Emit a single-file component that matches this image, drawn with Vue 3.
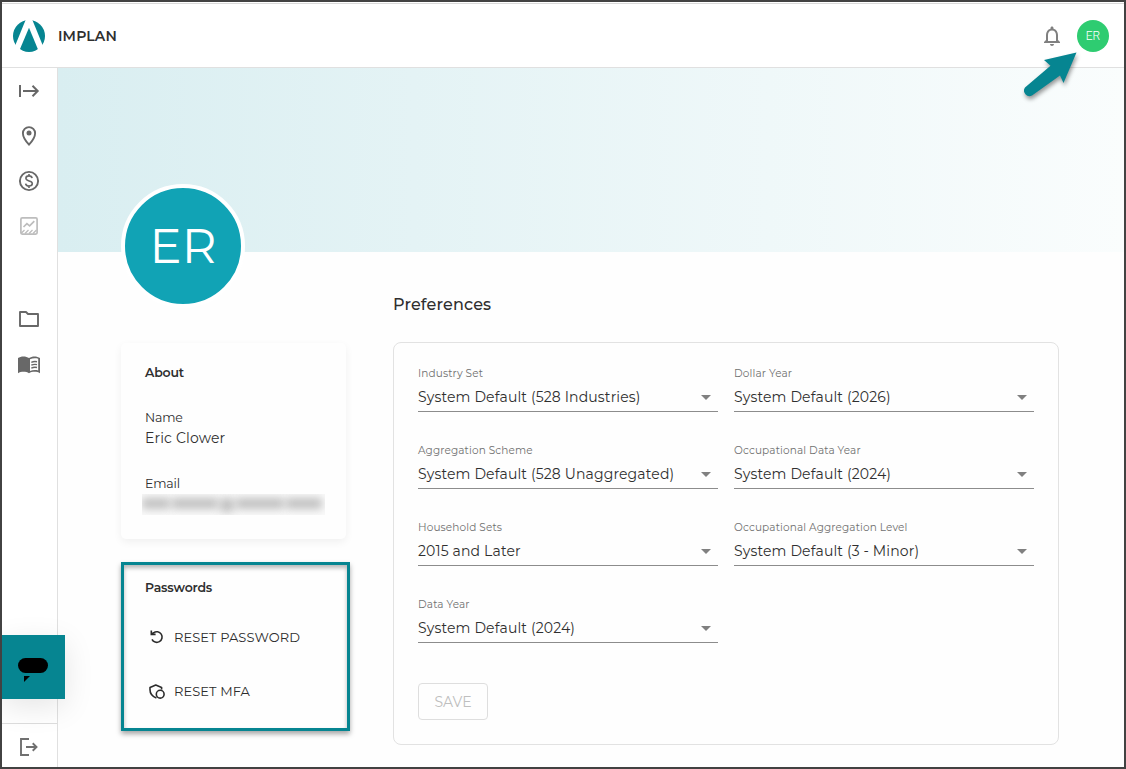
<script setup>
import { reactive } from 'vue'

const fields = reactive([
  { label: 'Industry Set', value: 'System Default (528 Industries)' },
  { label: 'Dollar Year', value: 'System Default (2026)' },
  { label: 'Aggregation Scheme', value: 'System Default (528 Unaggregated)' },
  { label: 'Occupational Data Year', value: 'System Default (2024)' },
  { label: 'Household Sets', value: '2015 and Later' },
  { label: 'Occupational Aggregation Level', value: 'System Default (3 - Minor)' },
  { label: 'Data Year', value: 'System Default (2024)' },
])
</script>

<template>
  <div class="app">
    <header class="header">
      <svg class="logo" width="32" height="32" viewBox="0 0 32 32">
        <defs>
          <clipPath id="logo-clip"><circle cx="16" cy="16" r="16" /></clipPath>
        </defs>
        <g clip-path="url(#logo-clip)" fill="#068591">
          <path d="M0 0H12.6L1.8 26.5H0z" />
          <path d="M32 0H19.4L30.2 26.5H32z" />
          <path d="M16 7.7L24.8 29L24 32H8L7 29z" />
        </g>
      </svg>
      <span class="brand">IMPLAN</span>
      <div class="header-right">
        <svg class="bell" width="24" height="24" viewBox="0 0 24 24">
          <path fill="#808080" d="M12 22c1.100 0 2-.9 2-2h-4c0 1.100.9 2 2 2zm6-6v-5c0-3.070-1.630-5.640-4.500-6.320V4c0-.83-.67-1.500-1.500-1.500s-1.500.67-1.500 1.500v.68C7.640 5.360 6 7.920 6 11v5l-2 2v1h16v-1l-2-2zm-2 1H8v-6c0-2.480 1.510-4.500 4-4.500s4 2.020 4 4.500v6z" />
        </svg>
        <div class="user">ER</div>
      </div>
    </header>

    <div class="body">
      <nav class="sidebar">
        <a class="nav-item">
          <svg width="24" height="24" viewBox="0 0 24 24" fill="none" stroke="#686868" stroke-width="2">
            <path d="M3 6v12M6 12h15M15.500 6.800L20.700 12l-5.200 5.200" />
          </svg>
        </a>
        <a class="nav-item">
          <svg width="24" height="24" viewBox="0 0 24 24" fill="none" stroke="#686868" stroke-width="1.900">
            <path d="M12 20.700C8.200 16.500 5.900 12.700 5.900 9.200a6.100 6.100 0 0 1 12.200 0c0 3.500-2.300 7.300-6.100 11.500z" />
            <circle cx="12" cy="8.900" r="2.500" fill="#686868" stroke="none" />
          </svg>
        </a>
        <a class="nav-item">
          <svg width="24" height="24" viewBox="0 0 24 24" fill="none" stroke="#686868" stroke-width="1.900">
            <circle cx="12" cy="12" r="9.100" />
            <path d="M15.100 9.100c-.2-1.500-1.400-2.200-3.100-2.200-1.800 0-3.100.9-3.100 2.400 0 3.500 6.400 1.700 6.400 5.200 0 1.600-1.400 2.500-3.300 2.500-1.900 0-3.200-.9-3.400-2.400M12 5v2.200M12 16.800V19" stroke-width="1.600" />
          </svg>
        </a>
        <a class="nav-item disabled">
          <svg width="24" height="24" viewBox="0 0 24 24" fill="none" stroke="#bdbdbd" stroke-width="1.700">
            <rect x="3.900" y="3.900" width="16.200" height="16.200" rx="1.300" />
            <path d="M6.500 13l3.400-3.400 2.700 2.200 4.700-4.700" />
            <path d="M4 19.500l3.500-3.500M8 19.500l3.500-3.500M12 19.500l3.500-3.500M16 19.500l3.500-3.500" stroke-width="1.300" />
          </svg>
        </a>
        <a class="nav-item folder">
          <svg width="24" height="24" viewBox="0 0 24 24" fill="none" stroke="#686868" stroke-width="1.900" stroke-linejoin="round">
            <path d="M3 5h6l2 2h10v12H3z" />
          </svg>
        </a>
        <a class="nav-item book">
          <svg width="24" height="24" viewBox="0 0 24 24" fill="#686868">
            <path d="M12 5.100C10.500 4 8.500 3.500 6.500 3.500S2.300 4 1 5.100v15.100c1.500-.9 3.500-1.400 5.500-1.400s4 .4 5.500 1.400c1.500-.9 3.500-1.400 5.500-1.400s4 .5 5.500 1.400V5.100c-1.500-1.100-3.500-1.600-5.500-1.600S13.500 4 12 5.100zm9.200 12.500c-2.600-.8-5.800-.6-8.200.5V6.300c2.400-1.100 5.600-1.300 8.200-.5z" />
            <path d="M14.300 9.300c1.700-.8 3.800-1 5.700-.6M14.300 12.200c1.700-.8 3.800-1 5.700-.6M14.300 15.100c1.700-.8 3.800-1 5.700-.6" fill="none" stroke="#686868" stroke-width="1.400" />
          </svg>
        </a>
        <a class="nav-item logout">
          <svg width="24" height="24" viewBox="0 0 24 24" fill="none" stroke="#707070" stroke-width="1.900">
            <path d="M12 4H4v16h8M9 12h10M15.700 8.300l3.800 3.700-3.800 3.700" />
          </svg>
        </a>
      </nav>

      <main class="content">
        <div class="banner"></div>
        <div class="columns">
          <section class="profile">
            <div class="avatar">ER</div>
            <div class="about">
              <h3>About</h3>
              <div class="item-label">Name</div>
              <div class="item-value">Eric Clower</div>
              <div class="item-label email">Email</div>
              <div class="masked">
                <i class="w1"></i><i class="w2"></i><i class="w3"></i><i class="w4"></i><i class="w5"></i>
              </div>
            </div>
            <div class="passwords">
              <h3>Passwords</h3>
              <button class="action">
                <svg width="18" height="18" viewBox="0 0 18 18" fill="none" stroke="#2c2c2c" stroke-width="1.600">
                  <path d="M4 5.700L5.600 4.800A5.300 5.300 0 1 1 4 11.300" />
                  <path d="M3.300 2.500v3.900h4.300" />
                </svg>
                <span>RESET PASSWORD</span>
              </button>
              <button class="action">
                <svg width="18" height="18" viewBox="0 0 18 18" fill="none" stroke="#2c2c2c" stroke-width="1.600">
                  <path d="M8.400 16C4.400 14.500 2 11.200 2 7.800V5.400L7.800 3l5.800 2.400v2.200" stroke-linejoin="round" />
                  <circle cx="12.200" cy="12.200" r="3.900" />
                </svg>
                <span>RESET MFA</span>
              </button>
            </div>
          </section>

          <section class="prefs">
            <h2>Preferences</h2>
            <div class="card">
              <div class="grid">
                <div v-for="f in fields" :key="f.label" class="field">
                  <label>{{ f.label }}</label>
                  <div class="select">
                    <span>{{ f.value }}</span>
                    <i class="caret"></i>
                  </div>
                </div>
              </div>
              <button class="save" disabled>SAVE</button>
            </div>
          </section>
        </div>
      </main>
    </div>

    <div class="chat">
      <svg width="63" height="64" viewBox="0 0 63 64">
        <rect x="16" y="23" width="30" height="15" rx="7.500" />
        <path d="M22 41h6l-6 6z" />
      </svg>
    </div>

    <svg class="pointer" width="70" height="60" viewBox="0 0 70 60">
      <path d="M63.500 9.500L31 17L37.500 22.800L12 44.500A5.500 5.500 0 0 0 19 52.500L47 32.500L50.500 40z" fill="#068591" />
    </svg>
  </div>
</template>

<style>
body { margin: 0; background: #fff; }
</style>

<style scoped>
.app {
  position: relative;
  box-sizing: border-box;
  width: 1126px;
  height: 769px;
  display: flex;
  flex-direction: column;
  overflow: hidden;
  border: 2px solid #424242;
  background: #fefefe;
  color: #2f2f2f;
  font-family: Montserrat, Inter, "Open Sans", sans-serif;
}
h2, h3 { margin: 0; }
button { padding: 0; border: 0; background: none; font-family: inherit; }

.header {
  box-sizing: border-box;
  height: 65px;
  margin-top: 1px;
  padding: 0 15px 0 11px;
  display: flex;
  align-items: center;
  flex-shrink: 0;
  background: #fff;
  border-top: 1px solid #d9d9d9;
  border-bottom: 1px solid #e0e0e0;
}
.brand { margin-left: 13px; font-size: 14px; font-weight: 600; letter-spacing: 0.15px; }
.header-right { margin-left: auto; display: flex; align-items: center; gap: 13px; }
.user {
  width: 32px;
  height: 32px;
  border-radius: 50%;
  background: #2ecc71;
  color: #fff;
  font-family: Roboto, sans-serif;
  font-size: 12px;
  font-weight: 300;
  line-height: 32px;
  text-align: center;
}

.body { flex: 1; display: flex; min-height: 0; }
.sidebar {
  box-sizing: border-box;
  width: 56px;
  display: flex;
  flex-direction: column;
  border-right: 1px solid #e0e0e0;
  background: #fff;
}
.nav-item {
  height: 45px;
  display: flex;
  align-items: center;
  justify-content: center;
  padding-right: 1px;
}
.folder { margin-top: 48px; }
.book { margin-top: 1px; }
.logout { box-sizing: border-box; margin-top: auto; height: 44px; padding-top: 3px; border-top: 1px solid #ddd; }

.content { flex: 1; min-width: 0; }
.banner { height: 184px; background: linear-gradient(90deg, #d9eef1, #fafdfd); }
.columns { display: flex; padding-left: 63px; gap: 47px; }
.profile { width: 225px; }
.avatar {
  width: 116px;
  height: 116px;
  margin-top: -68px;
  border: 4px solid #fff;
  border-radius: 50%;
  background: #11a3b5;
  color: #fff;
  font-size: 48px;
  line-height: 116px;
  text-align: center;
}
.about {
  box-sizing: border-box;
  height: 196px;
  margin-top: 35px;
  padding: 21px 20px 0 24px;
  border-radius: 5px;
  box-shadow: 0 3px 9px rgba(0, 0, 0, 0.06);
}
h3 { font-size: 12.5px; line-height: 18px; font-weight: 600; letter-spacing: -0.18px; }
.item-label { margin-top: 27px; font-size: 12.5px; line-height: 18px; letter-spacing: -0.15px; }
.item-value { margin-top: 1px; font-size: 14px; line-height: 20px; letter-spacing: 0.15px; }
.about .email { margin-top: 27px; }
.masked {
  height: 21px;
  width: 183px;
  margin: 1px 0 0 -3px;
  display: flex;
  align-items: flex-start;
  gap: 2px;
  overflow: hidden;
  background: #fafafa;
}
.masked i { height: 11px; margin-top: 4px; background: #999; opacity: 0.6; filter: blur(4px); }
.masked .w1 { width: 28px; }
.masked .w2 { width: 46px; }
.masked .w3 { width: 14px; height: 14px; }
.masked .w4 { width: 48px; }
.masked .w5 { width: 36px; }

.passwords {
  box-sizing: border-box;
  width: 229px;
  height: 169px;
  margin-top: 23px;
  padding: 14px 21px 0;
  border: 3px solid #068591;
  box-shadow: 0 3px 5px rgba(0, 0, 0, 0.35), inset 0 3px 4px rgba(0, 0, 0, 0.28);
}
.action {
  height: 54px;
  display: flex;
  align-items: center;
  gap: 8px;
  padding-left: 3px;
  color: #2c2c2c;
  font-size: 13px;
  letter-spacing: 0.08px;
}
.passwords h3 { margin-bottom: 13px; }

.prefs { width: 666px; padding-top: 41px; }
h2 { font-size: 16px; line-height: 24px; font-weight: 500; letter-spacing: 0.15px; }
.card {
  box-sizing: border-box;
  height: 403px;
  margin-top: 25px;
  padding: 23px 24px 0;
  border: 1px solid #e2e2e2;
  border-radius: 8px;
}
.grid { display: grid; grid-template-columns: 300px 300px; gap: 31px 16px; }
.field { box-sizing: border-box; height: 46px; padding-top: 1px; border-bottom: 1px solid #8c8c8c; }
.field label { display: block; font-size: 10.5px; line-height: 14px; color: #707070; letter-spacing: 0.13px; }
.select {
  height: 20px;
  margin-top: 6px;
  display: flex;
  align-items: center;
  justify-content: space-between;
  padding-right: 7px;
  font-size: 14px;
  letter-spacing: 0.15px;
}
.caret {
  border-left: 5px solid transparent;
  border-right: 5px solid transparent;
  border-top: 5px solid #808080;
}
.save {
  box-sizing: border-box;
  width: 70px;
  height: 37px;
  margin-top: 40px;
  border: 1px solid #dedede;
  border-radius: 4px;
  color: #bfbfbf;
  font-size: 14px;
}

.chat {
  position: absolute;
  left: 0;
  top: 633px;
  width: 63px;
  height: 64px;
  background: #068591;
  box-shadow: 0 8px 30px rgba(0, 0, 0, 0.1);
}
.pointer {
  position: absolute;
  left: 1011px;
  top: 41px;
  filter: drop-shadow(1px 3px 2px rgba(0, 0, 0, 0.4));
}
</style>
